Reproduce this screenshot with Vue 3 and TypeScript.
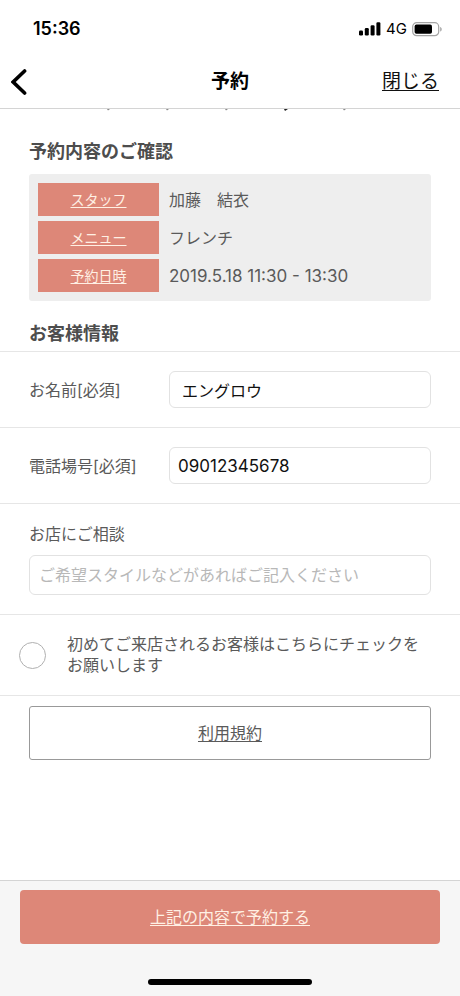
<script setup lang="ts">
import { ref } from 'vue'

interface BookingItem {
  label: string
  value: string
}

const booking: BookingItem[] = [
  { label: 'スタッフ', value: '加藤　結衣' },
  { label: 'メニュー', value: 'フレンチ' },
  { label: '予約日時', value: '2019.5.18 11:30 - 13:30' },
]

const customerName = ref('エングロウ')
const phone = ref('09012345678')
const request = ref('')
const firstVisit = ref(false)

const isLatin = (text: string): boolean => /^[\x20-\x7e]+$/.test(text)
</script>

<template>
  <div class="screen">
    <div class="status">
      <span class="time">15:36</span>
      <div class="signals">
        <svg class="bars" viewBox="0 0 22 14" aria-hidden="true">
          <rect x="0" y="8.5" width="4" height="5" rx="1.2" />
          <rect x="5.8" y="6" width="4" height="7.5" rx="1.2" />
          <rect x="11.6" y="3.3" width="4" height="10.2" rx="1.2" />
          <rect x="17.4" y="0.3" width="4" height="13.2" rx="1.2" />
        </svg>
        <span class="network">4G</span>
        <svg class="battery" viewBox="0 0 30 15" aria-hidden="true">
          <rect x="0.7" y="0.7" width="26" height="13" rx="4" fill="none" stroke="#a4a4a4" stroke-width="1.2" />
          <rect x="2.6" y="2.6" width="17.4" height="9.2" rx="1.8" />
          <path d="M28.2 5v4.6c1-.4 1.5-1.2 1.5-2.3S29.2 5.4 28.2 5z" fill="#a4a4a4" />
        </svg>
      </div>
    </div>

    <header class="nav">
      <button class="back" type="button" aria-label="戻る">
        <svg viewBox="0 0 16 26" aria-hidden="true">
          <path d="M13.6 2 2.2 13l11.4 11" fill="none" stroke="#000" stroke-width="3.6" stroke-linecap="round" stroke-linejoin="miter" />
        </svg>
      </button>
      <h1>予約</h1>
      <a class="close" href="#">閉じる</a>
    </header>

    <main>
      <svg class="remnant" viewBox="0 0 460 3" preserveAspectRatio="none" aria-hidden="true">
        <path d="M107 0h3l-2 1.5zM166 0h3l-2 1.5zM225 0h3l-2 1.5zM343 0h3l-2 1.5z" fill="#888" />
        <path d="M284 0h4l-3 2z" fill="#222" />
      </svg>

      <section class="summary">
        <h2>予約内容のご確認</h2>
        <dl class="card">
          <div v-for="item in booking" :key="item.label" class="entry">
            <dt>{{ item.label }}</dt>
            <dd :class="{ latin: isLatin(item.value) }">{{ item.value }}</dd>
          </div>
        </dl>
      </section>

      <form id="booking-form" @submit.prevent>
        <h2 class="form-title">お客様情報</h2>
        <div class="row">
          <label for="name">お名前[必須]</label>
          <input id="name" v-model="customerName" class="name" type="text" />
        </div>
        <div class="row">
          <label for="phone">電話場号[必須]</label>
          <input id="phone" v-model="phone" class="latin" type="tel" />
        </div>
        <div class="consult">
          <label for="request">お店にご相談</label>
          <input id="request" v-model="request" type="text" placeholder="ご希望スタイルなどがあればご記入ください" />
        </div>
        <div class="check">
          <input id="first" v-model="firstVisit" type="checkbox" />
          <label for="first">初めてご来店されるお客様はこちらにチェックをお願いします</label>
        </div>
        <a class="terms" href="#"><span>利用規約</span></a>
      </form>
    </main>

    <footer>
      <button class="submit" type="submit" form="booking-form">上記の内容で予約する</button>
      <div class="home"></div>
    </footer>
  </div>
</template>

<style>
body {
  margin: 0;
  background: #fff;
}
</style>

<style scoped>
* {
  box-sizing: border-box;
}

.screen {
  display: flex;
  flex-direction: column;
  min-height: 100vh;
  font-family: Inter, "Noto Sans CJK JP", sans-serif;
  font-size: 16px;
  line-height: 24px;
  color: #5a5a5a;
}

h1,
h2,
dl,
dd {
  margin: 0;
}

input,
button {
  font: inherit;
}

.status {
  display: flex;
  align-items: center;
  justify-content: space-between;
  height: 56px;
  padding: 2px 18px 0 33px;
  color: #000;
}

.time {
  font-size: 18px;
  font-weight: 600;
}

.signals {
  display: flex;
  align-items: center;
  gap: 5px;
}

.bars {
  width: 22px;
  height: 14px;
}

.network {
  font-size: 15px;
  font-weight: 400;
}

.battery {
  width: 30px;
  height: 15px;
}

.nav {
  display: grid;
  grid-template-columns: 1fr auto 1fr;
  align-items: center;
  height: 53px;
  padding: 0 21px;
  border-bottom: 1px solid #d4d4d4;
  color: #000;
}

.back {
  display: flex;
  justify-self: start;
  margin-left: -10px;
  padding: 0;
  border: 0;
  background: none;
}

.back svg {
  width: 16px;
  height: 26px;
}

h1 {
  font-size: 19px;
  font-weight: 700;
}

.close {
  justify-self: end;
  font-size: 19px;
  color: #111;
  text-underline-offset: 2px;
}

main {
  flex: 1;
}

.remnant {
  display: block;
  width: 100%;
  height: 3px;
}

.summary {
  padding: 28px 29px 0;
}

h2 {
  font-size: 18px;
  font-weight: 700;
  line-height: 24px;
  color: #4d4d4d;
}

.card {
  display: flex;
  flex-direction: column;
  gap: 5px;
  margin-top: 10px;
  padding: 9px;
  border-radius: 3px;
  background: #eee;
}

.entry {
  display: flex;
  align-items: center;
  gap: 10px;
}

dt {
  width: 121px;
  font-size: 14px;
  line-height: 33px;
  text-align: center;
  text-decoration: underline;
  text-underline-offset: 2px;
  color: #fff0e4;
  background: #dd8778;
}

.latin {
  font-size: 17px;
}

.form-title {
  padding: 21px 29px 5px;
}

.row {
  display: flex;
  align-items: center;
  height: 76px;
  padding: 0 29px;
  border-top: 1px solid #e6e6e6;
}

.row label {
  width: 140px;
}

input[type="text"],
input[type="tel"] {
  flex: 1;
  min-width: 0;
  height: 37px;
  padding: 0 8px;
  border: 1px solid #e2e2e2;
  border-radius: 6px;
  outline: 0;
  color: #111;
  background: #fff;
}

input.name {
  padding: 0 12px;
}

.consult {
  display: flex;
  flex-direction: column;
  gap: 9px;
  padding: 18px 29px 19px;
  border-top: 1px solid #e6e6e6;
}

.consult input[type="text"] {
  flex: none;
  height: 40px;
  padding: 0 9px;
}

input::placeholder {
  color: #b8b8b8;
  opacity: 1;
}

.check {
  display: flex;
  align-items: center;
  gap: 21px;
  height: 82px;
  padding: 0 29px 0 19px;
  border: 1px solid #e6e6e6;
  border-width: 1px 0;
}

.check input {
  flex: none;
  appearance: none;
  width: 27px;
  height: 27px;
  margin: 0;
  border: 1px solid #b0b0b0;
  border-radius: 50%;
}

.check input:checked {
  background: #dd8778;
}

.check label {
  line-height: 21px;
}

.terms {
  display: flex;
  align-items: center;
  justify-content: center;
  height: 54px;
  margin: 10px 29px;
  border: 1px solid #999;
  border-radius: 3px;
  color: #5a5a5a;
  text-underline-offset: 2px;
}

footer {
  display: flex;
  flex-direction: column;
  align-items: center;
  gap: 35px;
  padding: 9px 20px 11px;
  border-top: 1px solid #d4d4d4;
  background: #f6f6f6;
}

.submit {
  width: 100%;
  height: 54px;
  border: 0;
  border-radius: 4px;
  color: #fff0e4;
  background: #dd8778;
  text-decoration: underline;
  text-underline-offset: 2px;
}

.home {
  width: 39%;
  height: 6px;
  border-radius: 3px;
  background: #000;
}
</style>
